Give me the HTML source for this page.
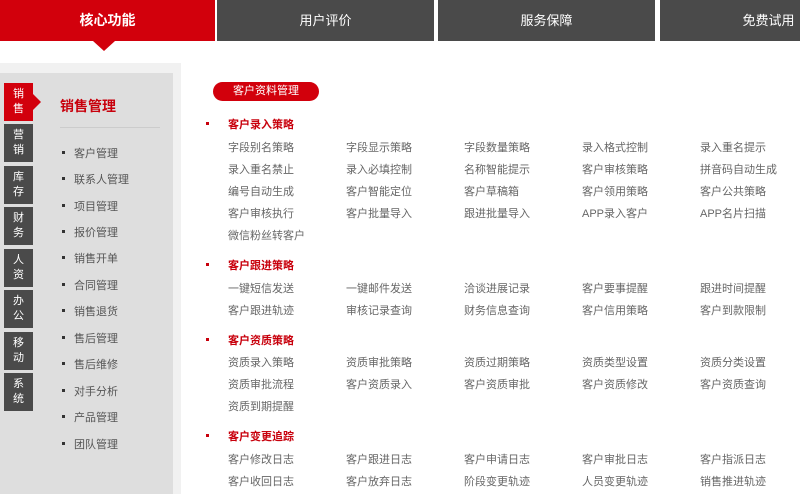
<!DOCTYPE html>
<html><head><meta charset="utf-8"><style>
*{margin:0;padding:0;box-sizing:border-box}
body{width:800px;height:494px;overflow:hidden;background:#fff;position:relative;font-family:"Liberation Sans","Noto Sans CJK SC",sans-serif}
.tab{position:absolute;top:0;height:41px;width:217px;background:#4a4a4a;color:#fff;font-size:13px;line-height:41px;text-align:center}
.tab.on{background:#d2000c;font-weight:bold;font-size:14px}
.tri{position:absolute;left:93px;top:41px;width:0;height:0;border-left:11px solid transparent;border-right:11px solid transparent;border-top:10px solid #d2000c}
.outer{position:absolute;left:0;top:63px;width:181px;height:431px;background:#f1f1f1}
.inner{position:absolute;left:0;top:73px;width:173px;height:421px;background:#dedede}
.lt{position:absolute;left:4px;width:29px;height:38px;background:#4a4a4a;color:#fff;font-size:11px;line-height:15px;text-align:center;padding-top:4px}
.lt.on{background:#d2000c}
.lt.on:after{content:"";position:absolute;right:-8px;top:11px;border-top:8px solid transparent;border-bottom:8px solid transparent;border-left:8px solid #d2000c}
.mt{position:absolute;left:60px;top:96px;color:#c8000c;font-size:14px;font-weight:bold}
.div{position:absolute;left:60px;top:127px;width:100px;height:1px;background:#ccc}
.mi{position:absolute;left:74px;font-size:11px;color:#555}
.mi:before{content:"";position:absolute;left:-12px;top:6px;width:3px;height:3px;background:#333}
.pill{position:absolute;left:213px;top:82px;width:106px;height:19px;border-radius:10px;background:#d2000c;color:#fff;font-size:11px;line-height:19px;text-align:center}
.st{position:absolute;left:228px;color:#c8000c;font-size:11px;font-weight:bold}
.st:before{content:"";position:absolute;left:-22px;top:6px;width:3px;height:3px;background:#c8000c}
.it{position:absolute;font-size:11px;color:#666;white-space:nowrap}
</style></head><body>
<div class="tab on" style="left:0;width:215px">核心功能</div>
<div class="tab" style="left:217px">用户评价</div>
<div class="tab" style="left:438px">服务保障</div>
<div class="tab" style="left:660px">免费试用</div>
<div class="tri"></div>
<div class="outer"></div><div class="inner"></div>
<div class="lt on" style="top:83px">销<br>售</div>
<div class="lt" style="top:124px">营<br>销</div>
<div class="lt" style="top:166px">库<br>存</div>
<div class="lt" style="top:207px">财<br>务</div>
<div class="lt" style="top:249px">人<br>资</div>
<div class="lt" style="top:290px">办<br>公</div>
<div class="lt" style="top:332px">移<br>动</div>
<div class="lt" style="top:373px">系<br>统</div>
<div class="mt">销售管理</div><div class="div"></div>
<div class="mi" style="top:145px">客户管理</div>
<div class="mi" style="top:171px">联系人管理</div>
<div class="mi" style="top:198px">项目管理</div>
<div class="mi" style="top:224px">报价管理</div>
<div class="mi" style="top:250px">销售开单</div>
<div class="mi" style="top:277px">合同管理</div>
<div class="mi" style="top:303px">销售退货</div>
<div class="mi" style="top:330px">售后管理</div>
<div class="mi" style="top:356px">售后维修</div>
<div class="mi" style="top:383px">对手分析</div>
<div class="mi" style="top:409px">产品管理</div>
<div class="mi" style="top:436px">团队管理</div>
<div class="pill">客户资料管理</div>
<div class="st" style="top:116px">客户录入策略</div>
<div class="st" style="top:257px">客户跟进策略</div>
<div class="st" style="top:332px">客户资质策略</div>
<div class="st" style="top:428px">客户变更追踪</div>
<div id="g"></div>
<script>
var rows=[
[139,["字段别名策略","字段显示策略","字段数量策略","录入格式控制","录入重名提示"]],
[161,["录入重名禁止","录入必填控制","名称智能提示","客户审核策略","拼音码自动生成"]],
[183,["编号自动生成","客户智能定位","客户草稿箱","客户领用策略","客户公共策略"]],
[205,["客户审核执行","客户批量导入","跟进批量导入","APP录入客户","APP名片扫描"]],
[227,["微信粉丝转客户"]],
[280,["一键短信发送","一键邮件发送","洽谈进展记录","客户要事提醒","跟进时间提醒"]],
[302,["客户跟进轨迹","审核记录查询","财务信息查询","客户信用策略","客户到款限制"]],
[354,["资质录入策略","资质审批策略","资质过期策略","资质类型设置","资质分类设置"]],
[376,["资质审批流程","客户资质录入","客户资质审批","客户资质修改","客户资质查询"]],
[398,["资质到期提醒"]],
[451,["客户修改日志","客户跟进日志","客户申请日志","客户审批日志","客户指派日志"]],
[473,["客户收回日志","客户放弃日志","阶段变更轨迹","人员变更轨迹","销售推进轨迹"]]];
var h="";rows.forEach(function(r){r[1].forEach(function(t,i){h+='<div class="it" style="top:'+r[0]+'px;left:'+(228+118*i)+'px">'+t+'</div>';});});
document.getElementById("g").innerHTML=h;
</script>
</body></html>
